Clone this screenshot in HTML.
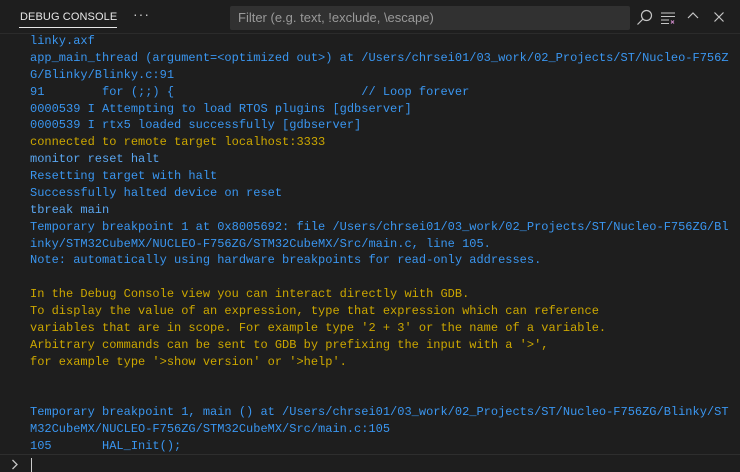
<!DOCTYPE html>
<html><head><meta charset="utf-8"><style>
*{margin:0;padding:0;box-sizing:border-box}
body{width:740px;height:472px;background:#1e1e1e;overflow:hidden;position:relative;font-family:"Liberation Sans",sans-serif}
.hdr{position:absolute;left:0;top:0;width:740px;height:34px;border-bottom:1px solid #2b2b2b}
.tab{position:absolute;left:20px;top:11px;font-size:11px;color:#e7e7e7;letter-spacing:0.1px}
.ul{position:absolute;left:19px;top:27px;width:98px;height:1px;background:#e7e7e7}
.dots{position:absolute;left:133px;top:6px;color:#ccc;font-size:14px;letter-spacing:1px}
.filter{position:absolute;left:230px;top:6px;width:400px;height:24px;background:#313131;border-radius:2px;color:#9a9a9a;font-size:13px;padding:4px 8px}
.log{position:absolute;left:30px;top:33px;font-family:"Liberation Mono",monospace;font-size:12px;line-height:16.875px;white-space:pre;color:#3a96f0}
.y{color:#cca700}.l{color:#5aa6f0}
.bot{position:absolute;left:0;top:454px;width:740px;height:18px;border-top:1px solid #2e2e2e}
.cur{position:absolute;left:31px;top:458px;width:1px;height:14px;background:#ccc}
</style></head><body>
<div class="hdr">
<div class="tab">DEBUG CONSOLE</div><div class="ul"></div>
<div class="dots">···</div>
<div class="filter">Filter (e.g. text, !exclude, \escape)</div>
<svg style="position:absolute;left:636px;top:9px" width="18" height="18" viewBox="0 0 18 18" fill="none" stroke="#c5c5c5" stroke-width="1.2"><circle cx="10.5" cy="6.5" r="5"/><path d="M7 10L1.5 15.5"/></svg>
<svg style="position:absolute;left:660px;top:11px" width="16" height="14" viewBox="0 0 16 14" fill="none" stroke="#c5c5c5" stroke-width="1.1"><path d="M1 2h14M1 5.5h14M1 9h8M1 12.5h8"/><path d="M11 9.5l3 3M14 9.5l-3 3" stroke="#c586c0"/></svg>
<svg style="position:absolute;left:686px;top:11px" width="14" height="10" viewBox="0 0 14 10" fill="none" stroke="#c5c5c5" stroke-width="1.2"><path d="M2 7l5-5 5 5"/></svg>
<svg style="position:absolute;left:713px;top:11px" width="12" height="12" viewBox="0 0 12 12" fill="none" stroke="#c5c5c5" stroke-width="1.2"><path d="M1.5 1.5l9 9M10.5 1.5l-9 9"/></svg>
</div>
<div class="log">linky.axf
app_main_thread (argument=&lt;optimized out&gt;) at /Users/chrsei01/03_work/02_Projects/ST/Nucleo-F756Z
G/Blinky/Blinky.c:91
91        for (;;) {                          // Loop forever
0000539 I Attempting to load RTOS plugins [gdbserver]
0000539 I rtx5 loaded successfully [gdbserver]
<span class="y">connected to remote target localhost:3333</span>
<span class="l">monitor reset halt</span>
Resetting target with halt
Successfully halted device on reset
<span class="l">tbreak main</span>
Temporary breakpoint 1 at 0x8005692: file /Users/chrsei01/03_work/02_Projects/ST/Nucleo-F756ZG/Bl
inky/STM32CubeMX/NUCLEO-F756ZG/STM32CubeMX/Src/main.c, line 105.
Note: automatically using hardware breakpoints for read-only addresses.

<span class="y">In the Debug Console view you can interact directly with GDB.
To display the value of an expression, type that expression which can reference
variables that are in scope. For example type '2 + 3' or the name of a variable.
Arbitrary commands can be sent to GDB by prefixing the input with a '&gt;',
for example type '&gt;show version' or '&gt;help'.</span>


Temporary breakpoint 1, main () at /Users/chrsei01/03_work/02_Projects/ST/Nucleo-F756ZG/Blinky/ST
M32CubeMX/NUCLEO-F756ZG/STM32CubeMX/Src/main.c:105
105       HAL_Init();</div>
<div class="bot"></div>
<svg style="position:absolute;left:11px;top:459px" width="8" height="11" viewBox="0 0 8 11" fill="none" stroke="#c5c5c5" stroke-width="1.3"><path d="M1.5 1l4.5 4.5L1.5 10"/></svg>
<div class="cur"></div>
</body></html>
